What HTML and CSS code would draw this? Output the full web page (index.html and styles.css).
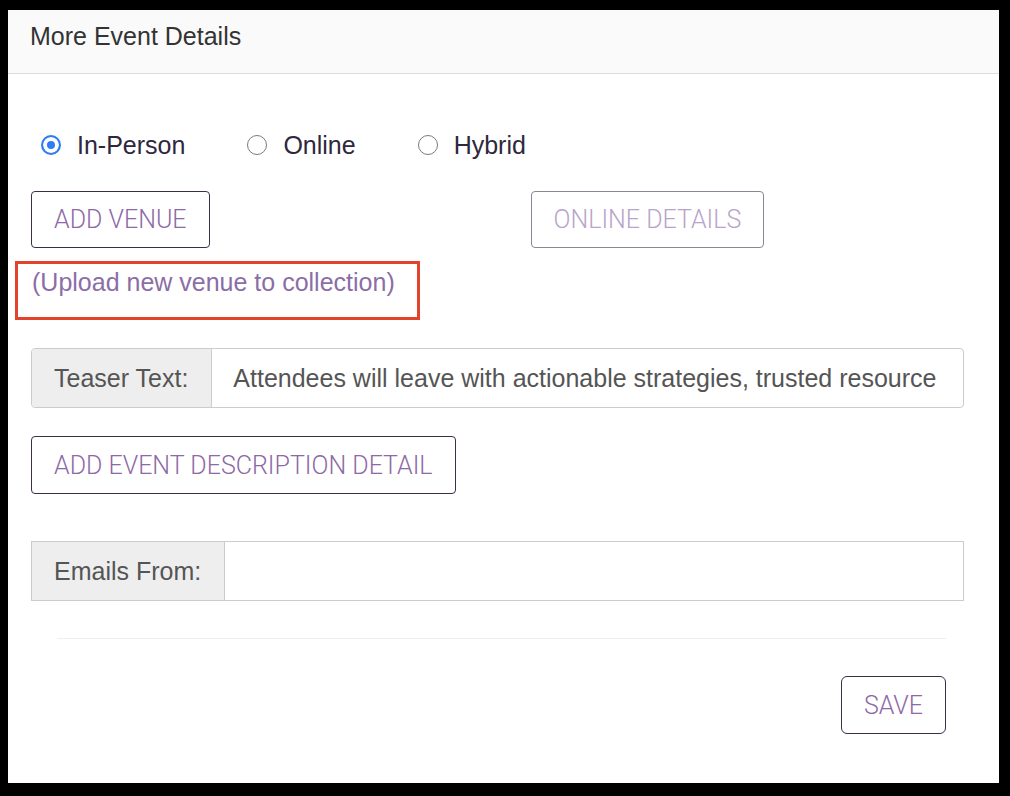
FILE: index.html
```html
<!DOCTYPE html>
<html lang="en">
<head>
    <meta charset="UTF-8">
    <meta name="viewport" content="width=device-width, initial-scale=1.0">
    <title>More Event Details</title>
    <link rel="stylesheet" href="styles.css">
</head>
<body>
    <div class="panel">
        <div class="panel-heading">More Event Details</div>
        <div class="panel-body">
            <div class="event-type">
                <label class="choice"><input type="radio" name="type" checked> In-Person</label>
                <label class="choice"><input type="radio" name="type"> Online</label>
                <label class="choice"><input type="radio" name="type"> Hybrid</label>
            </div>

            <div class="venue-row">
                <button class="btn">ADD VENUE</button>
                <button class="btn" disabled>ONLINE DETAILS</button>
            </div>

            <div class="highlight">
                <a class="upload-link" href="#">(Upload new venue to collection)</a>
            </div>

            <div class="input-group rounded">
                <span class="addon">Teaser Text:</span>
                <input class="field" type="text" value="Attendees will leave with actionable strategies, trusted resource">
            </div>

            <button class="btn wide">ADD EVENT DESCRIPTION DETAIL</button>

            <div class="input-group emails">
                <span class="addon">Emails From:</span>
                <input class="field" type="text" value="">
            </div>

            <div class="panel-footer">
                <button class="btn save">SAVE</button>
            </div>
        </div>
    </div>
</body>
</html>
```

FILE: styles.css
```css
* {
    box-sizing: border-box;
}

body {
    margin: 0;
    background: #000;
    padding: 10px 11px 13px 8px;
    font-family: 'Liberation Sans', Arial, sans-serif;
    font-size: 25px;
}

.panel {
    background: #fff;
}

.panel-heading {
    background: #fafafa;
    border-bottom: 1px solid #dddddd;
    padding: 8px 22px 19px;
    line-height: 36px;
    color: #333;
}

.panel-body {
    padding: 53px 35px 49px 23px;
}

/* radio row */
.event-type {
    display: flex;
    padding-left: 10px;
    gap: 62px;
    line-height: 36px;
    color: #2e283d;
}

.choice {
    display: flex;
    align-items: center;
    gap: 16px;
}

.choice input {
    appearance: none;
    margin: 0;
    width: 20px;
    height: 20px;
    border: 1px solid #7a7a7a;
    border-radius: 50%;
    background: #fff;
}

.choice input:checked {
    border: 2px solid #2f7cf6;
    background: #2f7cf6;
    box-shadow: inset 0 0 0 4px #fff;
}

/* buttons */
.btn {
    font-family: Roboto, 'Liberation Sans', sans-serif;
    font-weight: 300;
    font-size: 25px;
    color: #8d69a6;
    background: #fff;
    border: 1px solid #3c2d4b;
    border-radius: 4px;
    height: 57px;
    padding: 0 22px;
}

.btn:disabled {
    color: #b8a4c9;
    border-color: #8c8594;
}

.venue-row {
    display: flex;
    gap: 321px;
    margin-top: 28px;
}

.highlight {
    display: inline-block;
    margin: 13px 0 0 -16px;
    border: 3px solid #e3432c;
    padding: 0 22px 17px 14px;
}

.upload-link {
    display: block;
    line-height: 36px;
    color: #8b6ea6;
    text-decoration: none;
}

/* label + field */
.input-group {
    display: flex;
    height: 60px;
    margin-top: 28px;
    border: 1px solid #cccccc;
    color: #555;
}

.input-group.rounded {
    border-radius: 4px;
}

.addon {
    display: flex;
    align-items: center;
    padding: 0 23px 0 22px;
    background: #eeeeee;
    border-right: 1px solid #cccccc;
    border-radius: 4px 0 0 4px;
}

.emails .addon {
    border-radius: 0;
}

.field {
    flex: 1;
    min-width: 0;
    border: none;
    padding: 0 22px 0 21px;
    font-family: inherit;
    font-size: 25px;
    color: #555;
    background: transparent;
}

.wide {
    display: block;
    height: 58px;
    margin-top: 28px;
}

.emails {
    margin-top: 47px;
}

.panel-footer {
    margin: 37px 18px 0 26px;
    padding-top: 37px;
    border-top: 1px solid #eeeeee;
    display: flex;
    justify-content: flex-end;
}

.save {
    height: 58px;
    border-radius: 6px;
}
```
